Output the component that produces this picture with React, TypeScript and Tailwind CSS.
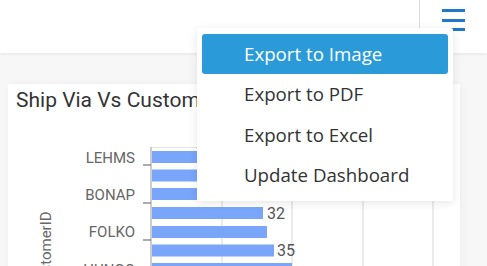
import React from "react";

const BAR_Y = [151, 169.5, 188, 207, 226, 244.5, 263];
const BAR_W = [60, 60, 60, 111, 115, 122, 140];
const OX = 8;
const OY = 112;

function Chart() {
  return (
    <svg width={452} height={160} className="block">
      <g transform={`translate(${-OX},${-OY})`}>
        {[222, 292, 363, 433].map((x) => (
          <line key={x} x1={x} x2={x} y1={147} y2={300} stroke="#e4e4e4" strokeWidth={1.5} />
        ))}
        <line x1={151} x2={433} y1={147.5} y2={147.5} stroke="#e4e4e4" strokeWidth={1} />
        {BAR_Y.map((y, i) => (
          <rect key={i} x={152} y={y} width={BAR_W[i]} height={12} fill="#79a6fb" />
        ))}
        <line x1={151} x2={151} y1={147} y2={300} stroke="#bdbdbd" strokeWidth={1.5} />
        {[165, 203, 240, 278].map((y) => (
          <line key={y} x1={143} x2={151} y1={y} y2={y} stroke="#777" strokeWidth={1.2} />
        ))}
        {[
          ["LEHMS", 157],
          ["BONAP", 194],
          ["FOLKO", 231.5],
          ["HUNGO", 269],
        ].map(([t, y]) => (
          <text
            key={t as string}
            x={135}
            y={(y as number) + 5.5}
            textAnchor="end"
            fontFamily="Roboto, sans-serif"
            fontSize={15}
            fill="#666"
          >
            {t}
          </text>
        ))}
        <text x={267} y={218.5} fontFamily="Roboto, sans-serif" fontSize={16} fill="#555">32</text>
        <text x={277} y={256} fontFamily="Roboto, sans-serif" fontSize={16} fill="#555">35</text>
        <text
          transform="translate(51,251) rotate(-90)"
          textAnchor="middle"
          fontFamily="Roboto, sans-serif"
          fontSize={15}
          fill="#666"
        >
          CustomerID
        </text>
      </g>
    </svg>
  );
}

export default function App() {
  const items = ["Export to Image", "Export to PDF", "Export to Excel", "Update Dashboard"];
  return (
    <div className="relative w-[487px] h-[266px] overflow-hidden bg-[#f7f7f7]">
      <header className="h-[53px] bg-white flex justify-end shadow-[0_1px_3px_rgba(0,0,0,0.08)] relative z-10">
        <div className="w-[68px] border-l border-[#dcdcdc] flex items-start justify-center pt-[9px]">
          <div className="flex flex-col gap-[6.5px] w-[23px]">
            <div className="h-[3px] bg-[#1f78c8]" />
            <div className="h-[3px] bg-[#1f78c8]" />
            <div className="h-[3px] bg-[#1f78c8]" />
          </div>
        </div>
      </header>
      <main className="pt-[31px] pl-[8px] pr-[27px]">
        <div className="bg-white h-[200px] shadow-[2px_0_8px_rgba(0,0,0,0.04)]">
          <div className="pt-[4px] pl-[8px] h-[28px] text-[21px] leading-[24px] text-[#333] font-['Roboto',sans-serif] whitespace-nowrap">
            Ship Via Vs CustomerID
          </div>
          <Chart />
        </div>
      </main>
      <div className="absolute left-[197px] top-[28px] w-[256px] bg-white rounded-[2px] shadow-[0_2px_10px_rgba(0,0,0,0.10)] p-[5px] pt-[6px] z-20 font-['Open_Sans',sans-serif] text-[18.7px] text-[#333]">
        {items.map((t, i) => (
          <div
            key={t}
            className={
              i === 0
                ? "h-[40px] flex items-center pl-[42px] bg-[#2a9ad8] text-white rounded-[3px]"
                : "h-[40.5px] flex items-center pl-[42px]"
            }
          >
            {t}
          </div>
        ))}
      </div>
    </div>
  );
}
